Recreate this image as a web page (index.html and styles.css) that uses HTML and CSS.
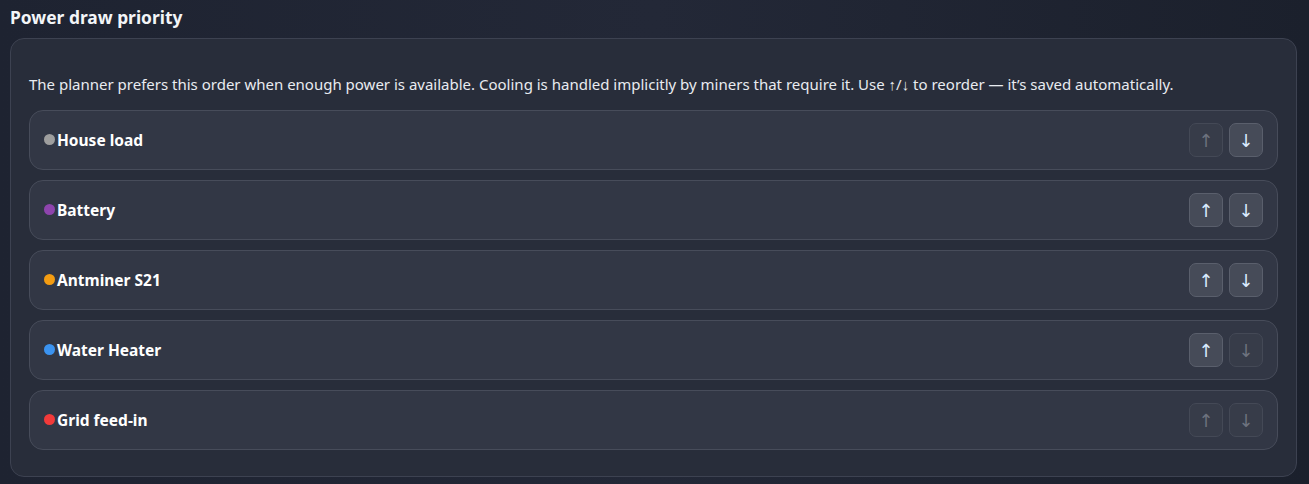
FILE: index.html
```html
<!DOCTYPE html>
<html lang="en">
<head>
  <meta charset="UTF-8">
  <title>Power draw priority</title>
  <link rel="stylesheet" href="styles.css">
</head>
<body>
  <h2 class="section-title">Power draw priority</h2>

  <div class="card">
    <p class="hint">The planner prefers this order when enough power is available. Cooling is handled implicitly by miners that require it. Use ↑/↓ to reorder — it’s saved automatically.</p>

    <div class="priority-list">
      <div class="priority-row">
        <span class="dot dot-house"></span>
        <span class="name">House load</span>
        <div class="actions">
          <button class="move" disabled>↑</button>
          <button class="move">↓</button>
        </div>
      </div>

      <div class="priority-row">
        <span class="dot dot-battery"></span>
        <span class="name">Battery</span>
        <div class="actions">
          <button class="move">↑</button>
          <button class="move">↓</button>
        </div>
      </div>

      <div class="priority-row">
        <span class="dot dot-miner"></span>
        <span class="name">Antminer S21</span>
        <div class="actions">
          <button class="move">↑</button>
          <button class="move">↓</button>
        </div>
      </div>

      <div class="priority-row">
        <span class="dot dot-heater"></span>
        <span class="name">Water Heater</span>
        <div class="actions">
          <button class="move">↑</button>
          <button class="move" disabled>↓</button>
        </div>
      </div>

      <div class="priority-row">
        <span class="dot dot-grid"></span>
        <span class="name">Grid feed-in</span>
        <div class="actions">
          <button class="move" disabled>↑</button>
          <button class="move" disabled>↓</button>
        </div>
      </div>
    </div>
  </div>
</body>
</html>
```

FILE: styles.css
```css
/* General Styles */
body {
  margin: 0;
  padding: 6px 12px 8px 10px;
  font-family: "Noto Sans", "Open Sans", sans-serif;
  color: #e6e9ef;
  background: linear-gradient(90deg, #1e2331 0%, #232837 50%, #1b202c 100%);
  min-height: 100vh;
  box-sizing: border-box;
}

.section-title {
  margin: 0 0 9px;
  font-size: 17.4px;
  font-weight: 700;
  line-height: 23px;
  color: #f3f5f8;
}

/* Card */
.card {
  background-color: #282d3a;
  border: 1px solid #3d4251;
  border-radius: 14px;
  padding: 18px 18px 26px;
}

.hint {
  margin: 17px 0 16px;
  font-size: 15px;
  line-height: 20px;
  color: #e8ebf0;
}

/* Priority rows */
.priority-list {
  display: flex;
  flex-direction: column;
  gap: 10px;
}

.priority-row {
  display: flex;
  align-items: center;
  height: 60px;
  box-sizing: border-box;
  padding: 0 14px;
  background-color: #323745;
  border: 1px solid #474c5a;
  border-radius: 14px;
}

.dot {
  width: 11px;
  height: 11px;
  border-radius: 50%;
  margin-right: 2px;
  margin-top: -2px;
  flex-shrink: 0;
}

.dot-house { background-color: #9e9e9e; }
.dot-battery { background-color: #8e44ad; }
.dot-miner { background-color: #f39c12; }
.dot-heater { background-color: #3b93f0; }
.dot-grid { background-color: #f23a3a; }

.name {
  font-size: 15.5px;
  font-weight: 700;
  color: #ffffff;
}

.actions {
  margin-left: auto;
  display: flex;
  gap: 6px;
}

.move {
  width: 34px;
  height: 34px;
  padding: 2px 0 0;
  border: 1px solid #5a5f6c;
  border-radius: 7px;
  background-color: #464b58;
  color: #dbeaff;
  font-family: "DejaVu Sans", sans-serif;
  font-size: 18px;
  line-height: 1;
  cursor: pointer;
}

.move:disabled {
  background-color: #373c49;
  border-color: #444956;
  color: #6d727e;
  cursor: default;
}
```
